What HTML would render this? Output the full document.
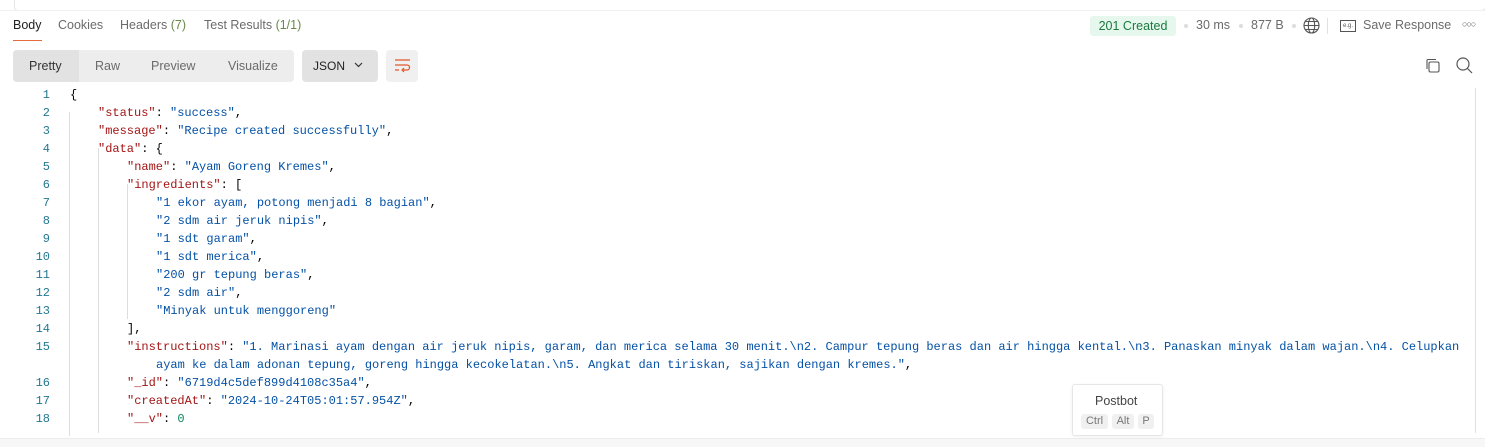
<!DOCTYPE html>
<html><head><style>
body{margin:0;width:1485px;height:446px;background:#fff;position:relative;overflow:hidden;font-family:"Liberation Sans",sans-serif;}
.a{position:absolute}
.tab{position:absolute;top:18px;font-size:12.5px;color:#6b6b6b}
.code{position:absolute;left:0;top:86px;font-family:"Liberation Mono",monospace;font-size:12px;}
.ln{position:absolute;left:0;width:50px;text-align:right;color:#237893;height:18px;line-height:18px}
.tx{position:absolute;white-space:pre;line-height:18px;color:#000}
.k{color:#a31515}.q{color:#c3602a}.s{color:#0451a5}.n{color:#098658}
</style></head><body>
<div class="a" style="left:14px;top:0;width:1470px;height:10px;border:1px solid #e6e6e6;border-top:none;border-radius:0 0 4px 4px"></div>
<div class="a" style="left:0;top:10px;width:1485px;height:1px;background:#f0f0f0"></div>
<div class="tab" style="left:13px;color:#212121">Body</div>
<div class="a" style="left:13px;top:40px;width:29px;height:1px;background:#e66a3a"></div>
<div class="tab" style="left:58px">Cookies</div>
<div class="tab" style="left:120px">Headers <span style="color:#6b8a4a">(7)</span></div>
<div class="tab" style="left:204px">Test Results <span style="color:#6b8a4a">(1/1)</span></div>
<div class="a" style="left:1090px;top:16px;width:86px;height:20px;background:#e6f8ee;border-radius:3px;color:#1b7a3e;font-size:12.5px;line-height:20px;text-align:center">201 Created</div>
<div class="a" style="left:1184px;top:24px;width:4px;height:4px;border-radius:2px;background:#ddd"></div>
<div class="tab" style="left:1196px">30 ms</div>
<div class="a" style="left:1239px;top:24px;width:4px;height:4px;border-radius:2px;background:#ddd"></div>
<div class="tab" style="left:1251px">877 B</div>
<div class="a" style="left:1292px;top:24px;width:4px;height:4px;border-radius:2px;background:#ddd"></div>
<svg class="a" style="left:1303px;top:17px" width="17" height="17" viewBox="0 0 17 17" fill="none" stroke="#555" stroke-width="1.1"><circle cx="8.5" cy="8.5" r="7.5"/><ellipse cx="8.5" cy="8.5" rx="3.2" ry="7.5"/><path d="M1 8.5h15M2.5 4.5h12M2.5 12.5h12"/></svg>
<div class="a" style="left:1327px;top:18px;width:1px;height:16px;background:#e0e0e0"></div>
<div class="a" style="left:1340px;top:20px;width:14px;height:10px;border:1px solid #555;font-size:6px;line-height:10px;text-align:center;color:#555">e.g.</div>
<div class="tab" style="left:1363px">Save Response</div>
<div class="a" style="left:1462px;top:19px;font-size:9px;color:#555;letter-spacing:-1px">○○○</div>
<div class="a" style="left:13px;top:50px;width:281px;height:32px;background:#ededed;border-radius:4px"></div>
<div class="a" style="left:13px;top:50px;width:66px;height:32px;background:#e2e2e2;border-radius:4px 0 0 4px"></div>
<div class="tab" style="left:29px;top:59px;color:#333">Pretty</div>
<div class="tab" style="left:95px;top:59px">Raw</div>
<div class="tab" style="left:151px;top:59px">Preview</div>
<div class="tab" style="left:228px;top:59px">Visualize</div>
<div class="a" style="left:302px;top:50px;width:76px;height:32px;background:#e2e2e2;border-radius:4px"></div>
<div class="tab" style="left:313px;top:59px;color:#222;font-size:12px">JSON</div>
<svg class="a" style="left:354px;top:62px" width="9" height="6" viewBox="0 0 9 6"><path d="M1 1l3.5 3.5L8 1" stroke="#333" fill="none" stroke-width="1.2"/></svg>
<div class="a" style="left:386px;top:50px;width:32px;height:32px;background:#f0f0f0;border-radius:4px"></div>
<svg class="a" style="left:394px;top:58px" width="17" height="16" viewBox="0 0 17 16" fill="none" stroke="#e0582a" stroke-width="1.2"><path d="M1 2h15M1 7h12a2.5 2.5 0 0 1 0 5H8M10 10l-2 2 2 2M1 12h4"/></svg>
<svg class="a" style="left:1425px;top:58px" width="15" height="15" viewBox="0 0 15 15" fill="none" stroke="#555" stroke-width="1.1"><rect x="4" y="4" width="10" height="10" rx="1.5"/><path d="M2 11V2.5A1 1 0 0 1 3 1.5h8"/></svg>
<svg class="a" style="left:1456px;top:57px" width="17" height="17" viewBox="0 0 17 17" fill="none" stroke="#555" stroke-width="1.2"><circle cx="7" cy="7" r="6"/><path d="M11.5 11.5l4.5 4.5"/></svg>
<div class="a" style="left:1475px;top:88px;width:1px;height:345px;background:#e0e0e0"></div>
<div class="a" style="left:69px;top:112px;width:1px;height:324px;background:#ddd"></div>
<div class="a" style="left:98px;top:148px;width:1px;height:285px;background:#ddd"></div>
<div class="a" style="left:127px;top:184px;width:1px;height:135px;background:#ddd"></div>
<div class="code">
<div class="ln" style="top:0">1</div><div class="tx" style="left:70px;top:0">{</div>
<div class="ln" style="top:18px">2</div><div class="tx" style="left:98px;top:18px"><span class="k">"status"</span>: <span class="s">"success"</span>,</div>
<div class="ln" style="top:36px">3</div><div class="tx" style="left:98px;top:36px"><span class="k">"message"</span>: <span class="s">"Recipe created successfully"</span>,</div>
<div class="ln" style="top:54px">4</div><div class="tx" style="left:98px;top:54px"><span class="k">"data"</span>: {</div>
<div class="ln" style="top:72px">5</div><div class="tx" style="left:127px;top:72px"><span class="k">"name"</span>: <span class="s">"Ayam Goreng Kremes"</span>,</div>
<div class="ln" style="top:90px">6</div><div class="tx" style="left:127px;top:90px"><span class="k">"ingredients"</span>: [</div>
<div class="ln" style="top:108px">7</div><div class="tx s" style="left:156px;top:108px">"1 ekor ayam, potong menjadi 8 bagian"<span style="color:#000">,</span></div>
<div class="ln" style="top:126px">8</div><div class="tx s" style="left:156px;top:126px">"2 sdm air jeruk nipis"<span style="color:#000">,</span></div>
<div class="ln" style="top:144px">9</div><div class="tx s" style="left:156px;top:144px">"1 sdt garam"<span style="color:#000">,</span></div>
<div class="ln" style="top:162px">10</div><div class="tx s" style="left:156px;top:162px">"1 sdt merica"<span style="color:#000">,</span></div>
<div class="ln" style="top:180px">11</div><div class="tx s" style="left:156px;top:180px">"200 gr tepung beras"<span style="color:#000">,</span></div>
<div class="ln" style="top:198px">12</div><div class="tx s" style="left:156px;top:198px">"2 sdm air"<span style="color:#000">,</span></div>
<div class="ln" style="top:216px">13</div><div class="tx s" style="left:156px;top:216px">"Minyak untuk menggoreng"</div>
<div class="ln" style="top:234px">14</div><div class="tx" style="left:127px;top:234px">],</div>
<div class="ln" style="top:252px">15</div><div class="tx" style="left:127px;top:252px"><span class="k">"instructions"</span>: <span class="s">"1. Marinasi ayam dengan air jeruk nipis, garam, dan merica selama 30 menit.\n2. Campur tepung beras dan air hingga kental.\n3. Panaskan minyak dalam wajan.\n4. Celupkan</span></div>
<div class="tx s" style="left:156px;top:270px">ayam ke dalam adonan tepung, goreng hingga kecokelatan.\n5. Angkat dan tiriskan, sajikan dengan kremes."<span style="color:#000">,</span></div>
<div class="ln" style="top:288px">16</div><div class="tx" style="left:127px;top:288px"><span class="k">"_id"</span>: <span class="s">"6719d4c5def899d4108c35a4"</span>,</div>
<div class="ln" style="top:306px">17</div><div class="tx" style="left:127px;top:306px"><span class="k">"createdAt"</span>: <span class="s">"2024-10-24T05:01:57.954Z"</span>,</div>
<div class="ln" style="top:324px">18</div><div class="tx" style="left:127px;top:324px"><span class="k">"__v"</span>: <span class="n">0</span></div>
</div>
<div class="a" style="left:0;top:438px;width:1485px;height:8px;background:#f7f7f7;border-top:1px solid #ececec"></div>
<div class="a" style="left:1072px;top:384px;width:89px;height:50px;background:#fff;border:1px solid #e6e6e6;border-radius:3px;box-shadow:0 1px 3px rgba(0,0,0,.06)"></div>
<div class="a" style="left:1095px;top:394px;font-size:12.5px;color:#444">Postbot</div>
<div class="a" style="left:1081px;top:414px;width:27px;height:15px;background:#f0f0f0;border-radius:3px;font-size:11px;color:#777;text-align:center;line-height:15px">Ctrl</div>
<div class="a" style="left:1112px;top:414px;width:22px;height:15px;background:#f0f0f0;border-radius:3px;font-size:11px;color:#777;text-align:center;line-height:15px">Alt</div>
<div class="a" style="left:1138px;top:414px;width:16px;height:15px;background:#f0f0f0;border-radius:3px;font-size:11px;color:#777;text-align:center;line-height:15px">P</div>
</body></html>
